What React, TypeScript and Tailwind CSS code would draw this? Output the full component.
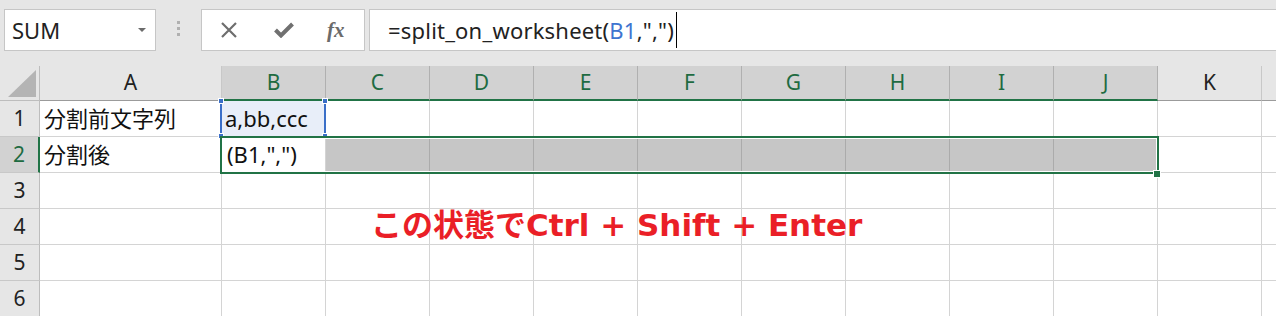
const FONT = "font-['Noto_Sans','Noto_Sans_CJK_JP',sans-serif]";

const COLS = ['B', 'C', 'D', 'E', 'F', 'G', 'H', 'I', 'J', 'K'];
const SELECTED = new Set(['B', 'C', 'D', 'E', 'F', 'G', 'H', 'I', 'J']);

type CellMap = Record<string, string>;

const values: CellMap = {
  A1: '分割前文字列',
  B1: 'a,bb,ccc',
  A2: '分割後',
  B2: '(B1,",")',
};

function Toolbar() {
  return (
    <div className="flex h-[66px] items-start bg-[#e6e6e6] pt-[9px]">
      {/* name box */}
      <div className="ml-[4px] flex h-[42px] w-[152px] items-center justify-between border border-[#c6c6c6] bg-white pl-[7px] pr-[9px]">
        <span className={`${FONT} text-[22px] text-[#222]`}>SUM</span>
        <svg width="8" height="5" viewBox="0 0 8 5">
          <polygon points="0,0 8,0 4,4" fill="#6b6b6b" />
        </svg>
      </div>
      <div className="flex w-[45px] justify-center pt-[12px]">
        <div className="flex flex-col gap-[3px]">
          <div className="h-[3px] w-[3px] bg-[#b0b0b0]" />
          <div className="h-[3px] w-[3px] bg-[#b0b0b0]" />
          <div className="h-[3px] w-[3px] bg-[#b0b0b0]" />
        </div>
      </div>
      {/* cancel / enter / fx */}
      <div className="flex h-[42px] w-[164px] items-center border border-[#c6c6c6] bg-white pl-[18px]">
        <svg width="18" height="16" viewBox="0 0 18 16">
          <path d="M2 1 L16 15 M16 1 L2 15" stroke="#6e6e6e" strokeWidth="2.2" />
        </svg>
        <svg className="ml-[36px]" width="20" height="16" viewBox="0 0 20 16">
          <path d="M1.5 8 L7 13.5 L18.5 2" stroke="#707070" strokeWidth="4" fill="none" />
        </svg>
        <span className="ml-[33px] font-['Liberation_Serif',serif] text-[21px] font-bold italic leading-none text-[#6b6b6b]">
          fx
        </span>
      </div>
      {/* formula bar */}
      <div className="ml-[4px] flex h-[42px] flex-1 items-center border border-r-0 border-[#c6c6c6] bg-white pl-[18px]">
        <span className={`${FONT} text-[22px] tracking-[0.2px] text-[#222]`}>
          =split_on_worksheet(<span className="text-[#3e74d0]">B1</span>,",")
        </span>
        <div className="ml-[2px] h-[36px] w-px bg-black" />
      </div>
    </div>
  );
}

function HeaderRow() {
  return (
    <div className="flex h-[35px]">
      <div className="relative w-[40px] shrink-0 border-r border-b border-[#bdbdbd] bg-[#e6e6e6]">
        <svg className="absolute left-0 top-0" width="39" height="34" viewBox="0 0 39 34">
          <polygon points="36,4 36,31 8,31" fill="#b4b4b4" />
        </svg>
      </div>
      <div
        className={`${FONT} flex w-[182px] shrink-0 items-center justify-center border-r border-b border-r-[#c8c8c8] border-b-[#9b9b9b] bg-[#e6e6e6] text-[21px] text-[#222]`}
      >
        A
      </div>
      {COLS.map((c) => {
        const sel = SELECTED.has(c);
        return (
          <div
            key={c}
            className={
              sel
                ? `${FONT} flex w-[104px] shrink-0 items-center justify-center border-r border-b-2 border-r-[#b0b0b0] border-b-[#217346] bg-[#d2d2d2] text-[21px] text-[#1e6b41]`
                : `${FONT} flex w-[104px] shrink-0 items-center justify-center border-r border-b border-r-[#c8c8c8] border-b-[#9b9b9b] bg-[#e6e6e6] text-[21px] text-[#222]`
            }
          >
            {c}
          </div>
        );
      })}
      <div className="flex-1 border-b border-[#9b9b9b] bg-[#e6e6e6]" />
    </div>
  );
}

function Row({ n }: { n: number }) {
  const selRow = n === 2;
  return (
    <div className="flex h-[36px]">
      <div
        className={
          selRow
            ? `${FONT} flex w-[40px] shrink-0 items-center justify-center border-r-2 border-b border-r-[#217346] border-b-[#c8c8c8] bg-[#d2d2d2] text-[21px] text-[#1e6b41]`
            : `${FONT} flex w-[40px] shrink-0 items-center justify-center border-r border-b border-r-[#bdbdbd] border-b-[#c8c8c8] bg-[#e6e6e6] text-[21px] text-[#222]`
        }
      >
        {n}
      </div>
      <div
        className={`${FONT} flex w-[182px] shrink-0 items-center border-r border-b border-[#d4d4d4] pl-[4px] text-[22px] text-[#111]`}
      >
        {values[`A${n}`]}
      </div>
      {COLS.map((c) => {
        const gray = selRow && c !== 'B' && c !== 'K';
        const blue = n === 1 && c === 'B';
        return (
          <div
            key={c}
            className={
              gray
                ? 'w-[104px] shrink-0 border-r border-b border-r-[#ababab] border-b-[#d4d4d4] bg-[#c6c6c6]'
                : blue
                  ? `${FONT} flex w-[104px] shrink-0 items-center border-r border-b border-[#d4d4d4] bg-[#e8eef9] pl-[3px] text-[22px] text-[#111]`
                  : `${FONT} flex w-[104px] shrink-0 items-center border-r border-b border-[#d4d4d4] pl-[5px] text-[22px] text-[#111]`
            }
          >
            {values[`${c}${n}`]}
          </div>
        );
      })}
      <div className="flex-1 border-b border-[#d4d4d4]" />
    </div>
  );
}

function Handle({ className }: { className: string }) {
  return <div className={`absolute h-[6px] w-[6px] border border-white bg-[#3b6fc8] ${className}`} />;
}

export default function App() {
  return (
    <div className="relative h-[316px] w-[1276px] overflow-hidden bg-white">
      <Toolbar />
      <HeaderRow />
      {[1, 2, 3, 4, 5, 6].map((n) => (
        <Row key={n} n={n} />
      ))}

      {/* reference highlight on B1 */}
      <div className="absolute left-[220px] top-[101px] h-[36px] w-[106px] border-x-2 border-[#3b6fc8]" />
      <Handle className="left-[218px] top-[98px]" />
      <Handle className="left-[322px] top-[98px]" />
      <Handle className="left-[218px] top-[133px]" />
      <Handle className="left-[322px] top-[133px]" />

      {/* selection B2:J2 */}
      <div className="absolute left-[220px] top-[136px] h-[38px] w-[939px] border-2 border-[#217346] shadow-[inset_0_0_0_1px_white]" />
      <div className="absolute left-[1153px] top-[170px] h-[8px] w-[8px] border border-white bg-[#217346]" />

      <div className="absolute left-[371px] top-[205px] font-['DejaVu_Sans','Noto_Sans_CJK_JP',sans-serif] text-[31px] font-bold leading-[40px] text-[#ea1f27]">
        この状態でCtrl + Shift + Enter
      </div>
    </div>
  );
}
